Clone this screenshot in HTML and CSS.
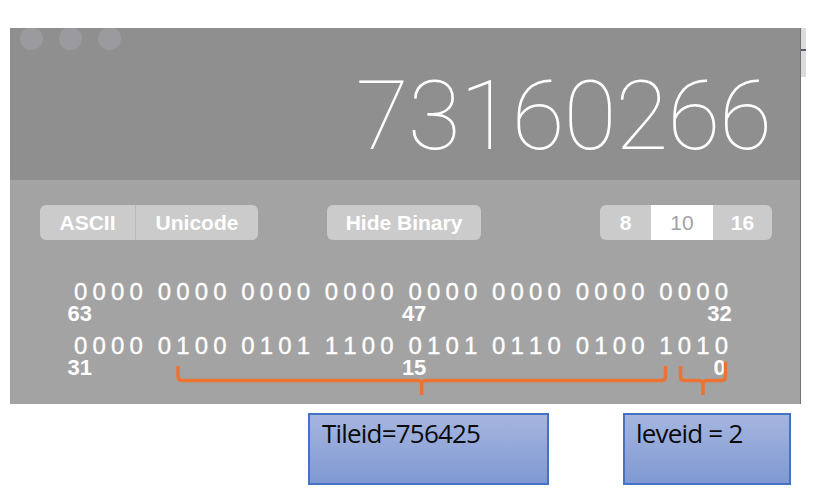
FILE: index.html
```html
<!DOCTYPE html>
<html>
<head>
<meta charset="utf-8">
<link rel="stylesheet" href="styles.css">
</head>
<body>
<div class="screen">
  <div class="top-row">
    <div class="calc">
      <div class="display">
        <div class="lights"><span class="light"></span><span class="light"></span><span class="light"></span></div>
        <div class="value">73160266</div>
      </div>
      <div class="panel">
        <div class="controls">
          <div class="seg seg-enc"><span class="seg-item w-ascii">ASCII</span><span class="seg-item w-uni">Unicode</span></div>
          <div class="btn hide-bin">Hide Binary</div>
          <div class="seg seg-base"><span class="seg-item w-8">8</span><span class="seg-item w-10 active">10</span><span class="seg-item w-16">16</span></div>
        </div>
        <div class="bits">
          <div class="bit-row">
            <div class="nib"><span>0</span><span>0</span><span>0</span><span>0</span></div>
            <div class="nib"><span>0</span><span>0</span><span>0</span><span>0</span></div>
            <div class="nib"><span>0</span><span>0</span><span>0</span><span>0</span></div>
            <div class="nib"><span>0</span><span>0</span><span>0</span><span>0</span></div>
            <div class="nib"><span>0</span><span>0</span><span>0</span><span>0</span></div>
            <div class="nib"><span>0</span><span>0</span><span>0</span><span>0</span></div>
            <div class="nib"><span>0</span><span>0</span><span>0</span><span>0</span></div>
            <div class="nib"><span>0</span><span>0</span><span>0</span><span>0</span></div>
          </div>
          <div class="label-row">
            <span class="lbl c1">63</span>
            <span class="lbl c5">47</span>
            <span class="lbl c8 end">32</span>
          </div>
          <div class="bit-row row2">
            <div class="nib"><span>0</span><span>0</span><span>0</span><span>0</span></div>
            <div class="nib"><span>0</span><span>1</span><span>0</span><span>0</span></div>
            <div class="nib"><span>0</span><span>1</span><span>0</span><span>1</span></div>
            <div class="nib"><span>1</span><span>1</span><span>0</span><span>0</span></div>
            <div class="nib"><span>0</span><span>1</span><span>0</span><span>1</span></div>
            <div class="nib"><span>0</span><span>1</span><span>1</span><span>0</span></div>
            <div class="nib"><span>0</span><span>1</span><span>0</span><span>0</span></div>
            <div class="nib"><span>1</span><span>0</span><span>1</span><span>0</span></div>
          </div>
          <div class="label-row">
            <span class="lbl c1">31</span>
            <span class="lbl c5">15</span>
            <span class="lbl c8 end zero">0</span>
          </div>
        </div>
      </div>
    </div>
    <div class="edge"><span class="edge-mark"></span></div>
  </div>
  <div class="notes">
    <div class="note note-tile">Tileid=756425</div>
    <div class="note note-level">leveid = 2</div>
  </div>
  <svg class="braces" width="824" height="500" viewBox="0 0 824 500">
    <path d="M178,366 V376 Q178,380.5 182,380.5 H417.5 Q421.7,380.5 421.7,385 V395 M421.7,385 Q421.7,380.5 426,380.5 H661.5 Q665.5,380.5 665.5,376 V366"/>
    <path d="M680.5,366 V376 Q680.5,380.5 684.5,380.5 H699 Q703,380.5 703,385 V395 M703,385 Q703,380.5 707,380.5 H721.5 Q725.5,380.5 725.5,376 V362"/>
  </svg>
</div>
</body>
</html>
```

FILE: styles.css
```css
html, body {
  margin: 0;
  padding: 0;
  background: #ffffff;
}

.screen {
  position: relative;
  width: 824px;
  height: 500px;
  overflow: hidden;
  background: #ffffff;
  font-family: "Liberation Sans", Arial, sans-serif;
}

.top-row {
  display: flex;
  align-items: flex-start;
  padding-top: 28px;
  padding-left: 10px;
}

.calc {
  width: 790px;
  height: 376px;
  border-right: 1px solid #727272;
  display: flex;
  flex-direction: column;
}

.edge {
  width: 5px;
  height: 49px;
  background: #dcdcdc;
  display: flex;
  flex-direction: column;
  padding-top: 21px;
  box-sizing: border-box;
}

.edge-mark {
  display: block;
  width: 5px;
  height: 2px;
  background: #55606e;
}

/* ---------- display ---------- */
.display {
  height: 152px;
  background: #8f8f8f;
  overflow: hidden;
  display: flex;
  flex-direction: column;
}

.lights {
  display: flex;
  gap: 16px;
  padding-left: 10px;
  margin-top: -1px;
}

.light {
  width: 23px;
  height: 23px;
  border-radius: 50%;
  background: #9b9b9f;
}

.value {
  margin-top: 18px;
  padding-right: 29px;
  text-align: right;
  font-family: Roboto, "Helvetica Neue", sans-serif;
  font-weight: 100;
  font-size: 97px;
  line-height: 97px;
  color: #ffffff;
  letter-spacing: -1.2px;
}

/* ---------- panel ---------- */
.panel {
  height: 224px;
  background: #a3a3a3;
  display: flex;
  flex-direction: column;
}

.controls {
  display: flex;
  padding-top: 25px;
  padding-left: 30px;
  height: 35px;
}

.seg {
  display: flex;
  height: 35px;
  border-radius: 6px;
  overflow: hidden;
  background: #cbcbcb;
}

.seg-item,
.btn {
  display: flex;
  align-items: center;
  justify-content: center;
  font-size: 21px;
  font-weight: bold;
  color: #ffffff;
}

.w-ascii { width: 95px; border-right: 1px solid #b9b9b9; }
.w-uni { width: 122px; }

.btn {
  height: 35px;
  border-radius: 6px;
  background: #cbcbcb;
}

.hide-bin {
  width: 154px;
  margin-left: 69px;
}

.seg-base { margin-left: 119px; }
.w-8 { width: 51px; }
.w-10 { width: 62px; }
.w-16 { width: 59px; }

.seg-item.active {
  background: #ffffff;
  color: #a2a2a2;
  font-weight: normal;
}

/* ---------- bits ---------- */
.bits {
  margin-top: 40px;
  padding-left: 61.5px;
  display: flex;
  flex-direction: column;
}

.bit-row,
.label-row {
  display: grid;
  grid-template-columns: repeat(8, 74px);
  column-gap: 9.6px;
}

.bit-row {
  height: 24px;
}

.row2 {
  margin-top: 10px;
}

.nib {
  display: flex;
}

.nib span {
  width: 18.5px;
  text-align: center;
  font-size: 24px;
  line-height: 24px;
  color: #ffffff;
  -webkit-text-stroke: 0.35px #ffffff;
}

.label-row {
  height: 20px;
}

.lbl {
  font-size: 22px;
  line-height: 20px;
  font-weight: bold;
  color: #ffffff;
}

.c1 { grid-column: 1; margin-left: -4px; }
.c5 { grid-column: 5; margin-left: -4px; }
.c8 { grid-column: 8; }
.end { justify-self: end; margin-right: -1px; }
.zero { margin-right: 5px; }

/* ---------- notes ---------- */
.notes {
  display: flex;
  gap: 74px;
  margin-top: 9px;
  padding-left: 308px;
}

.note {
  height: 72px;
  box-sizing: border-box;
  border: 2px solid #4472c4;
  background: linear-gradient(to bottom, #a5b5df, #8099d2);
  font-family: "Open Sans", "Noto Sans", sans-serif;
  font-size: 26px;
  line-height: 31px;
  letter-spacing: -0.8px;
  color: #0a0a0a;
  padding-top: 3px;
}

.note-tile {
  width: 241px;
  padding-left: 12px;
}

.note-level {
  width: 168px;
  padding-left: 11px;
}

/* ---------- annotation braces ---------- */
.braces {
  position: absolute;
  left: 0;
  top: 0;
  pointer-events: none;
}

.braces path {
  fill: none;
  stroke: #ec7331;
  stroke-width: 3.5;
}
```
